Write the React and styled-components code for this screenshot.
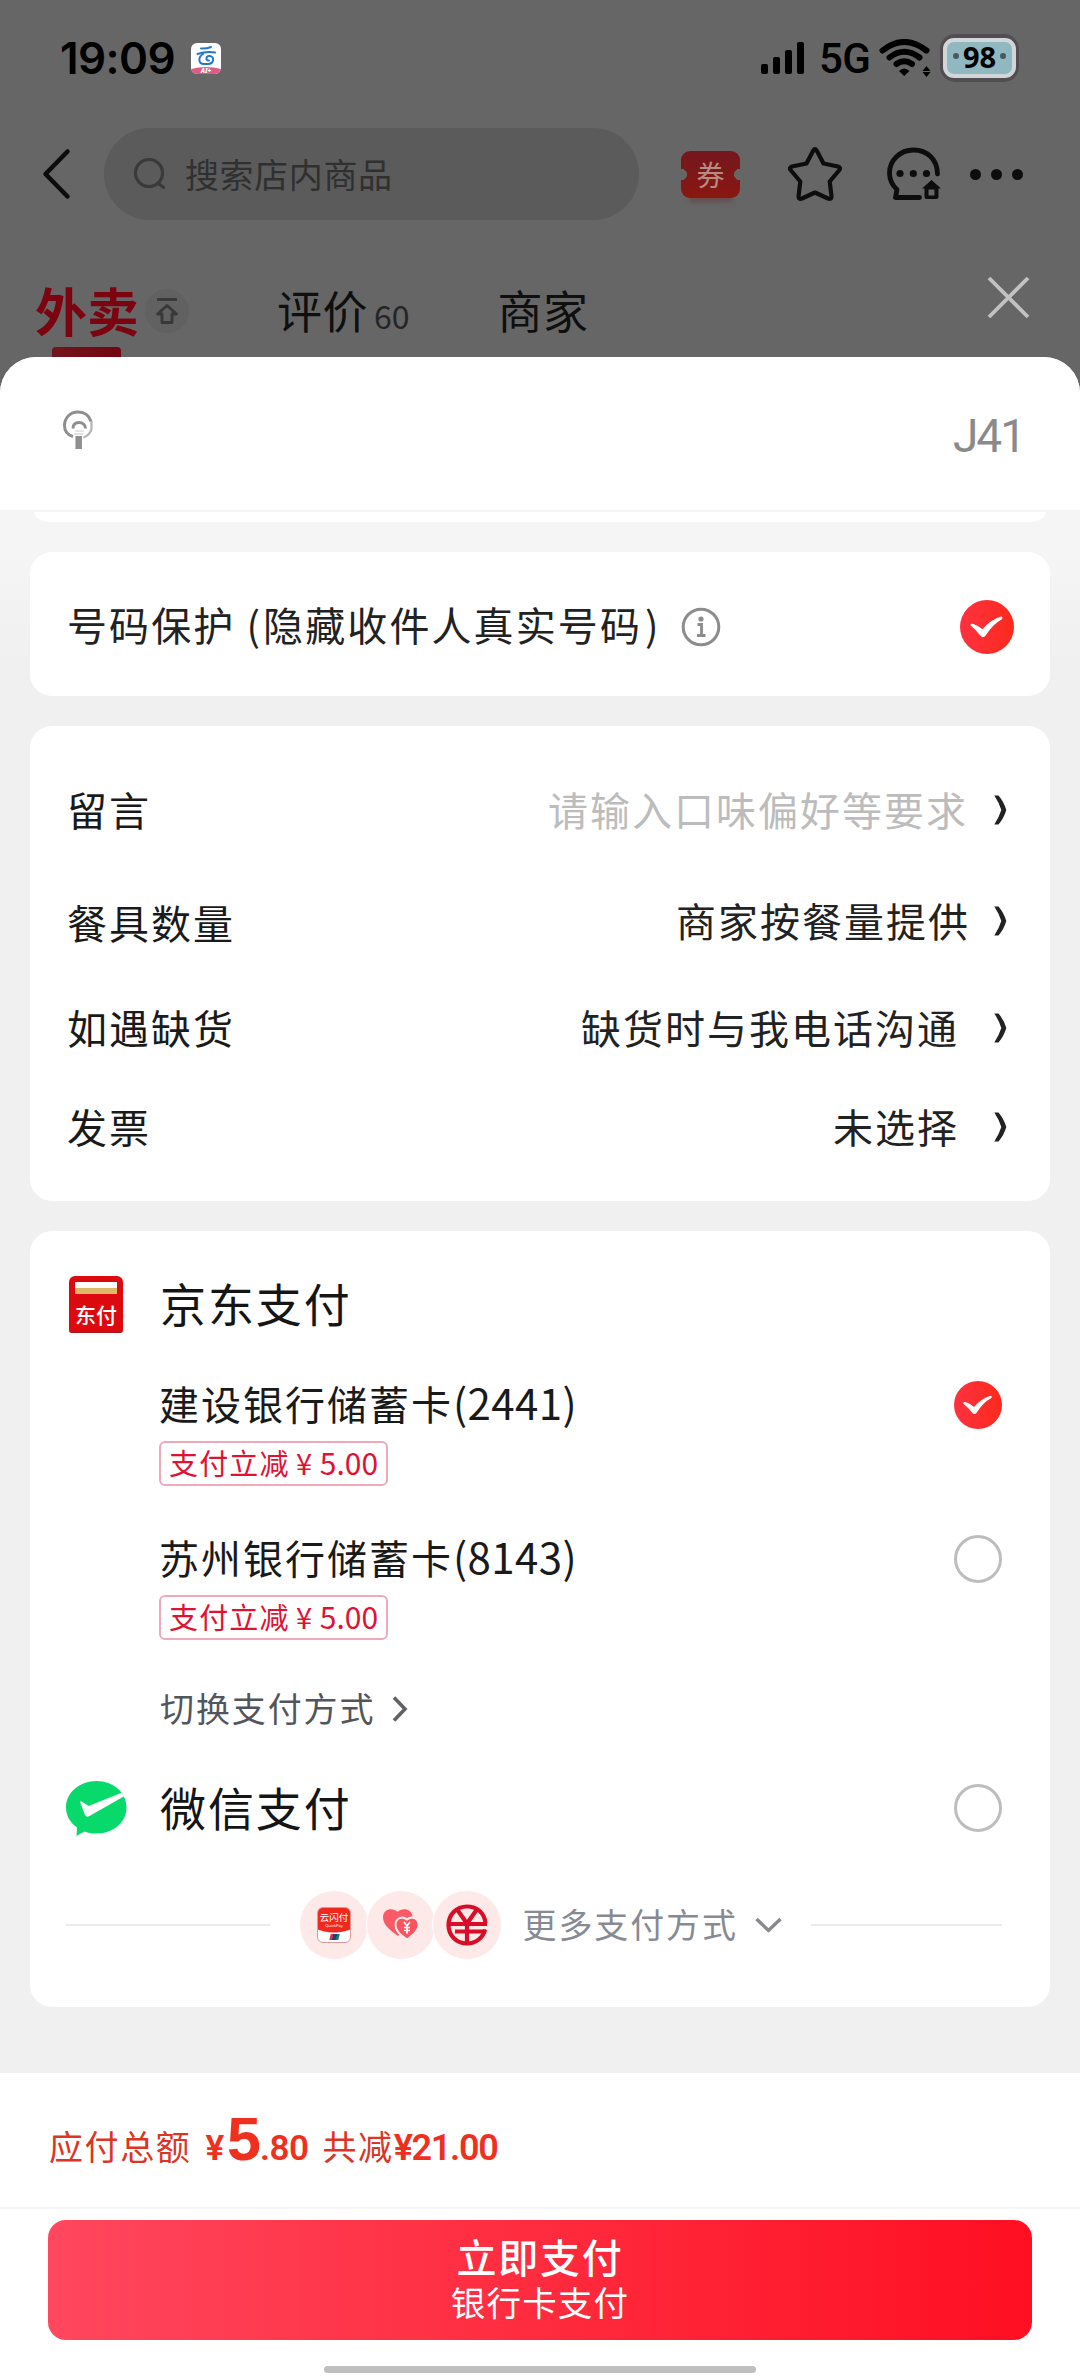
import React from "react";
import styled, { createGlobalStyle } from "styled-components";

const Global = createGlobalStyle`
  * { box-sizing: border-box; }
  html, body { margin: 0; padding: 0; background: #f0f0f0; }
  body {
    font-family: "Noto Sans CJK SC", sans-serif;
    color: #1a1a1a;
    overflow: hidden;
  }
  svg { display: block; flex: none; }
`;

const Screen = styled.div`
  width: 1080px;
  height: 2376px;
  background: #666;
  display: flex;
  flex-direction: column;
  overflow: hidden;
  white-space: nowrap;
`;

/* ---------- dimmed page behind the sheet ---------- */

const StatusBar = styled.div`
  height: 116px;
  display: flex;
  align-items: center;
  padding: 0 61px 0 60px;
`;
const Clock = styled.span`
  font: 600 44px/44px Inter, sans-serif;
  letter-spacing: -0.6px;
  color: #000;
  width: 131px;
`;
const StatusRight = styled.div`
  margin-left: auto;
  display: flex;
  align-items: center;
`;
const Network = styled.span`
  font: 500 42px/44px Roboto, sans-serif;
  letter-spacing: -0.5px;
  color: #000;
  width: 60px;
  margin-left: 14px;
  padding-top: 2px;
`;
const Battery = styled.div`
  width: 79px;
  height: 48px;
  border-radius: 15px;
  background: #524d52;
  padding: 4px 3px;
  margin-left: 9px;
`;
const BatteryShell = styled.div`
  height: 40px;
  border-radius: 11px;
  border: 4px solid #d2d6d8;
  background: #90b8c0;
  display: flex;
  align-items: center;
  justify-content: space-between;
  padding: 0 6px;
`;
const BatteryDot = styled.i`
  width: 6px;
  height: 6px;
  border-radius: 3px;
  background: #46595e;
  margin-top: -5px;
`;
const BatteryText = styled.span`
  font: 700 29px/30px "Noto Sans", sans-serif;
  color: #000;
  margin: -3px -4px 0;
`;

const SearchRow = styled.div`
  height: 116px;
  display: flex;
  align-items: center;
  padding: 0 52px 0 40px;
`;
const SearchBox = styled.div`
  width: 535px;
  height: 92px;
  margin-left: 33px;
  border-radius: 46px;
  background: #5b5b5b;
  display: flex;
  align-items: center;
  padding-left: 29px;
`;
const SearchHint = styled.span`
  font-size: 34px;
  line-height: 44px;
  letter-spacing: 0.6px;
  color: #303030;
  margin-left: 18px;
`;
const Coupon = styled.div`
  width: 59px;
  height: 47px;
  margin-left: 42px;
  border-radius: 9px;
  background: radial-gradient(circle 6px at 0 50%, #666 96%, transparent),
    radial-gradient(circle 6px at 100% 50%, #666 96%, transparent),
    linear-gradient(#74171f, #8a1711);
  box-shadow: 0 12px 5px -8px #694b4e;
  display: flex;
  align-items: center;
  justify-content: center;
  font-size: 28px;
  line-height: 40px;
  color: #b88b83;
`;
const StarSlot = styled.div`
  margin-left: 47px;
`;
const ChatSlot = styled.div`
  margin-left: 43px;
`;
const Dots = styled.div`
  display: flex;
  gap: 10px;
  margin-left: 28px;
  i {
    width: 11px;
    height: 11px;
    border-radius: 6px;
    background: #0d0d0d;
  }
`;

const TabRow = styled.div`
  height: 125px;
  display: flex;
  padding: 0 50px 0 35px;
`;
const ActiveTab = styled.div`
  width: 110px;
  padding-top: 42px;
`;
const ActiveLabel = styled.div`
  font-size: 52px;
  line-height: 72px;
  font-weight: 700;
  color: #7c0410;
`;
const ActiveBar = styled.div`
  width: 69px;
  height: 12px;
  margin: 1px 0 0 17px;
  border-radius: 4px 4px 0 0;
  background: linear-gradient(90deg, #74151c, #730510);
`;
const TopBadge = styled.div`
  width: 44px;
  height: 44px;
  border-radius: 22px;
  background: #616161;
  margin-top: 57px;
  display: flex;
  align-items: center;
  justify-content: center;
`;
const Tab = styled.div`
  display: flex;
  align-items: baseline;
  height: 64px;
  margin: 46px 0 0 ${(p) => p.$gap}px;
  font-size: 45px;
  line-height: 64px;
  letter-spacing: 0.5px;
  color: #0f0f0f;
  small {
    font-size: 32px;
    letter-spacing: 0;
    margin-left: 6px;
    color: #252525;
  }
`;
const CloseSlot = styled.div`
  margin: 44px 0 0 auto;
`;

/* ---------- sheet ---------- */

const Sheet = styled.div`
  flex: 1;
  display: flex;
  flex-direction: column;
  border-radius: 36px 36px 0 0;
  overflow: hidden;
  background: #f0f0f0;
`;
const SheetHead = styled.div`
  height: 153px;
  flex: none;
  background: #fff;
  display: flex;
  align-items: center;
  justify-content: space-between;
  padding: 0 56px 0 60px;
`;
const PinSlot = styled.div`
  margin-top: -7px;
`;
const HeadCode = styled.span`
  font: 400 46px/60px Roboto, sans-serif;
  letter-spacing: -2px;
  color: #8a8a8a;
  margin-top: 5px;
`;
const SheetBody = styled.div`
  flex: 1;
  padding: 2px 30px 0;
  background: linear-gradient(#f5f5f5 0, #f5f5f5 40px, #f0f0f0 150px);
`;
const CardTail = styled.div`
  height: 10px;
  margin: 0 4px;
  background: #fff;
  border-radius: 0 0 16px 16px / 0 0 10px 10px;
`;
const Card = styled.section`
  height: ${(p) => p.$h}px;
  margin-top: 30px;
  background: #fff;
  border-radius: 22px;
  padding: ${(p) => p.$pad || "0"};
`;
const PrivacyRow = styled.div`
  height: 100%;
  display: flex;
  align-items: center;
  padding: 5px 36px 0 37px;
`;
const Label = styled.span`
  font-size: 40px;
  line-height: 58px;
  letter-spacing: 2.1px;
  color: #222;
  margin-top: -5px;
`;
const Paren = styled.span`
  margin: 0 ${(p) => p.$after || 0}px 0 ${(p) => p.$before || 0}px;
`;
const InfoSlot = styled.div`
  margin: 0 auto 0 20px;
`;

const OptionRow = styled.div`
  height: ${(p) => p.$h}px;
  display: flex;
  align-items: center;
  justify-content: space-between;
  padding: 0 43px 0 37px;
`;
const OptionLabel = styled.span`
  font-size: 40px;
  line-height: 58px;
  letter-spacing: 2px;
  color: #1a1a1a;
  padding-top: ${(p) => p.$drop || 0}px;
`;
const OptionValue = styled.span`
  display: flex;
  align-items: center;
  font-size: 40px;
  line-height: 58px;
  letter-spacing: 2px;
  color: ${(p) => (p.$muted ? "#bcbcbc" : "#222")};
  gap: ${(p) => p.$gap}px;
  svg { margin-top: 2px; }
`;

const PayRow = styled.div`
  height: ${(p) => p.$h}px;
  margin-bottom: ${(p) => p.$after || 0}px;
  display: flex;
  align-items: center;
  padding: 0 48px 0 36px;
`;
const PayIcon = styled.div`
  width: 94px;
  padding-left: ${(p) => p.$inset || 0}px;
`;
const PayTitle = styled.span`
  flex: 1;
  font-size: 46px;
  line-height: 64px;
  letter-spacing: 1.9px;
  color: #151515;
  margin-top: -5px;
`;
const JdBadge = styled.div`
  width: 54px;
  height: 57px;
  border-radius: 6px 6px 3px 3px;
  background: #dc0a0e;
  border-bottom: 1px solid #a8161a;
  padding: 6px 6px 0;
  display: flex;
  flex-direction: column;
  align-items: center;
`;
const JdStripe = styled.div`
  width: 42px;
  height: 12px;
  flex: none;
  background: linear-gradient(#fff 50%, #deb769 50%);
`;
const JdText = styled.span`
  font-size: 21px;
  line-height: 30px;
  font-weight: 500;
  color: #fff;
  margin-top: 5px;
`;
const Bank = styled.div`
  height: 154px;
  padding: 0 48px 0 129px;
  display: flex;
  justify-content: space-between;
`;
const BankName = styled.div`
  font-size: 40px;
  line-height: 58px;
  letter-spacing: 2px;
  color: #1a1a1a;
  b {
    font-weight: 400;
    font-size: 42px;
    letter-spacing: 0.4px;
  }
`;
const Tag = styled.div`
  width: 229px;
  height: 45px;
  margin-top: 9px;
  border: 2px solid #f0a9bb;
  border-radius: 6px;
  display: flex;
  justify-content: center;
  font-size: 29px;
  line-height: 38px;
  letter-spacing: 1.2px;
  color: #e01233;
  span {
    width: 30px;
    text-align: center;
  }
  em {
    font-style: normal;
    letter-spacing: 0;
    font-size: 30px;
  }
`;
const Radio = styled.div`
  width: 48px;
  height: 48px;
  border-radius: 24px;
  border: 3px solid #bdbdbd;
`;
const BankRadio = styled.div`
  padding-top: 8px;
`;
const SwitchRow = styled.div`
  height: 56px;
  padding-left: 130px;
  display: flex;
  align-items: center;
  gap: 17px;
  font-size: 34px;
  letter-spacing: 1.9px;
  color: #53555c;
  span { margin-top: -3px; }
`;
const MoreRow = styled.div`
  height: 70px;
  margin-top: 11px;
  display: flex;
  align-items: center;
  padding: 0 48px 0 36px;
`;
const Rule = styled.i`
  height: 2px;
  flex: ${(p) => (p.$w ? "none" : 1)};
  width: ${(p) => (p.$w ? p.$w + "px" : "auto")};
  margin-left: ${(p) => p.$gap || 0}px;
  background: #ebebeb;
`;
const Bubbles = styled.div`
  display: flex;
  margin-left: 29px;
`;
const Bubble = styled.div`
  width: 70px;
  height: 70px;
  margin-right: -3.500px;
  border-radius: 35px;
  background: #fee9e9;
  border: 1px solid #fff;
  display: flex;
  align-items: center;
  justify-content: center;
`;
const MoreText = styled.span`
  font-size: 34px;
  line-height: 50px;
  letter-spacing: 1.9px;
  color: #878a93;
  margin: -2px 17px 0 24px;
`;
const FlashIcon = styled.div`
  width: 34px;
  height: 36px;
  border: 1px solid #d99;
  border-radius: 6px;
  background: radial-gradient(ellipse 34px 25px at 50% 0, #f0281e 96%, #fff);
  display: flex;
  flex-direction: column;
  align-items: center;
  color: #fff;
  font-size: 9.5px;
  line-height: 13px;
  padding-top: 3px;
  small {
    font: 4px/4px "Noto Sans", sans-serif;
  }
  i {
    width: 9px;
    height: 6px;
    margin-top: 6px;
    transform: skewX(-14deg);
    background: linear-gradient(90deg, #d8304a 30%, #1d3f7d 30% 70%, #0c7a7c 70%);
  }
`;

/* ---------- footer ---------- */

const Total = styled.div`
  height: 134px;
  flex: none;
  background: #fff;
  display: flex;
  align-items: baseline;
  padding: 36px 0 0 49px;
  font-size: 34px;
  line-height: 60px;
  letter-spacing: 1.600px;
  color: #dc3524;
`;
const Money = styled.b`
  font: ${(p) => p.$weight || 600} ${(p) => p.$size}px/60px ${(p) => (p.$bold ? '"Liberation Sans"' : "Roboto")}, sans-serif;
  letter-spacing: ${(p) => p.$track || 0}px;
  margin-left: ${(p) => p.$gap || 0}px;
  color: #f0301f;
`;
const Discount = styled.span`
  margin-left: 14px;
`;
const Footer = styled.div`
  height: 169px;
  flex: none;
  background: #fff;
  border-top: 2px solid #f5f5f5;
  padding: 11px 48px 0;
  display: flex;
  flex-direction: column;
  align-items: center;
`;
const PayButton = styled.button`
  width: 984px;
  height: 120px;
  flex: none;
  border: 0;
  padding: 0;
  border-radius: 18px;
  background: linear-gradient(90deg, #ff475e, #ff2b3e 50%, #ff0f22);
  color: #fff;
  font-family: inherit;
  display: flex;
  flex-direction: column;
  align-items: center;
  strong {
    font-size: 40px;
    line-height: 48px;
    font-weight: 500;
    letter-spacing: 1.8px;
    margin-top: 12px;
  }
  span {
    font-size: 34.5px;
    line-height: 40px;
    letter-spacing: 1.2px;
    margin-top: 1px;
  }
`;
const HomeBar = styled.div`
  width: 432px;
  height: 7px;
  border-radius: 4px;
  background: #bfbfbf;
  margin-top: 26px;
`;

/* ---------- drawings ---------- */

const CloudApp = () => (
  <svg width="30" height="31" viewBox="0 0 30 31">
    <defs>
      <clipPath id="app"><rect width="30" height="31" rx="6" /></clipPath>
    </defs>
    <g clipPath="url(#app)">
      <rect width="30" height="31" fill="#fff" />
      <path d="M0 26Q15 22 30 26V31H0z" fill="#dd5c86" />
      <g fill="none" stroke="#2277cf" strokeWidth="2" strokeLinecap="round">
        <path d="M10 5.5Q15 6 20 4" />
        <path d="M6.500 11Q15 8 24 9.500" />
        <path d="M12 11C7 14 7 21 13 21H17C23 21 24 13 18.500 13C14.500 13 14.500 18 18 17.500" />
      </g>
    </g>
    <text x="15" y="30" textAnchor="middle" fontFamily="Noto Sans" fontStyle="italic" fontWeight="800" fontSize="6.500" fill="#fff">AI+</text>
  </svg>
);

const Signal = () => (
  <svg width="44" height="33" viewBox="0 0 44 33">
    <rect x="0" y="22" width="7" height="10" rx="2" />
    <rect x="12" y="15" width="7" height="17" rx="2" />
    <rect x="24" y="8" width="7" height="24" rx="2" />
    <rect x="36" y="0" width="7" height="32" rx="2" />
  </svg>
);

const Wifi = () => (
  <svg width="52" height="38" viewBox="0 0 52 38">
    <g fill="none" stroke="#000" strokeWidth="6" strokeLinecap="round">
      <path d="M3.500 11.500Q25.200 -5.500 47.500 11.500" />
      <path d="M10.500 18.500Q25.200 7 40.500 18.500" />
      <path d="M17.500 25Q25.200 19.500 33 25" />
    </g>
    <path d="M20 32Q25 27 30.500 32L25.200 37z" />
    <path d="M47.500 27l4 5h-8zM47.500 38l4-5h-8z" />
  </svg>
);

const Back = () => (
  <svg width="31" height="52" viewBox="0 0 31 52">
    <path d="M27.500 3.500L5.500 26L27.500 48.500" fill="none" stroke="#0c0c0c" strokeWidth="4.500" strokeLinecap="round" strokeLinejoin="round" />
  </svg>
);

const SearchIcon = () => (
  <svg width="34" height="34" viewBox="0 0 34 34" fill="none" stroke="#3a3a3a" strokeWidth="3.200" strokeLinecap="round">
    <circle cx="16" cy="16" r="13.500" />
    <path d="M25 26L30.500 30.500" />
  </svg>
);

const Star = () => (
  <svg width="56" height="56" viewBox="0 0 56 56">
    <path d="M26.300 4.500Q28 1.800 29.700 4.500L36.500 17.500L51 20.500Q54.500 21.500 52 24.500L42.700 35.500L44.500 50Q44.600 53.800 41 52.500L28 46.500L15 52.500Q11.500 53.800 11.600 50L13.300 35.500L4 24.500Q1.500 21.500 5 20.500L19.500 17.500Z" fill="none" stroke="#0d0d0d" strokeWidth="4.200" strokeLinejoin="round" />
  </svg>
);

const Chat = () => (
  <svg width="56" height="56" viewBox="0 0 56 56" fill="none" stroke="#0d0d0d" strokeWidth="4.800" strokeLinecap="round" strokeLinejoin="round">
    <path d="M51.500 28C51.500 13.500 41 4 27.500 4C14 4 3.500 14.500 3.500 27C3.500 34.500 6.500 39.500 11 43.500L9.500 51.500H33.500" />
    <g fill="#0d0d0d" stroke="none">
      <circle cx="14" cy="27.500" r="3.600" />
      <circle cx="27.300" cy="27.500" r="3.600" />
      <circle cx="40.500" cy="27.500" r="3.600" />
      <path d="M45.500 34L55 42.500H52.500V50.500Q52.500 53 50 53H41Q38.500 53 38.500 50.500V42.500H36zM42.500 43.500V49.500H48.500V43.500z" fillRule="evenodd" />
    </g>
  </svg>
);

const ToTop = () => (
  <svg width="26" height="28" viewBox="0 0 26 28" fill="none" stroke="#383838" strokeWidth="2.800" strokeLinejoin="round">
    <path d="M3 2.500H23" />
    <path d="M13 8.500L22.500 17H18V25.500H8V17H3.500Z" />
  </svg>
);

const Close = () => (
  <svg width="43" height="43" viewBox="0 0 43 43">
    <path d="M2 2L41 41M41 2L2 41" stroke="#c2c2c2" strokeWidth="3.800" />
  </svg>
);

const Pin = () => (
  <svg width="36" height="42" viewBox="0 0 36 42" fill="none" stroke="#8f8f8f" strokeWidth="3">
    <path d="M31 12.500C29 6 24 3 18 3C10 3 4.500 9 4.500 16.500C4.500 22.500 8 26 13 27.500" />
    <path d="M31.500 12V20Q30 26 23.500 28.500" stroke="#b4b4b4" strokeWidth="2.200" />
    <path d="M13 19.500C13 15 16 13.500 19 13.500C22.500 13.500 25.500 16 25.500 19.500" />
    <path d="M15 22H24M14 25H23" stroke="#dcdcdc" strokeWidth="1.500" />
    <path d="M18.700 27V40" strokeWidth="6.500" />
  </svg>
);

const Info = () => (
  <svg width="40" height="40" viewBox="0 0 40 40" fill="none" stroke="#8c8c8c">
    <circle cx="20" cy="20" r="17.800" strokeWidth="3" />
    <circle cx="20" cy="12" r="2.600" fill="#8c8c8c" stroke="none" />
    <path d="M16.500 17.500H20.500V28M16 28.500H24.500" strokeWidth="2.800" />
  </svg>
);

const Check = ({ size }) => (
  <svg width={size} height={size} viewBox="0 0 48 48">
    <defs>
      <linearGradient id="red" x1="0" x2="1">
        <stop offset="0" stopColor="#ff3140" />
        <stop offset="1" stopColor="#fc2a1c" />
      </linearGradient>
    </defs>
    <circle cx="24" cy="24" r="24" fill="url(#red)" />
    <path d="M9 22.300Q10 20.500 12 21.300Q16 22.600 20 26Q27 17.500 36.500 14.700Q38.600 15 37.300 17Q29 21.500 22.800 31.500Q20.500 34.500 18 31.500Q14 26.500 9 22.300z" fill="#fff" />
  </svg>
);

const RowArrow = () => (
  <svg width="14" height="32" viewBox="0 0 14 32">
    <path d="M1.300 1.500H5.500Q11 8 13.300 16Q11 24 5.500 30.500H1.300Q6 23.500 8.300 16Q6 8.500 1.300 1.500z" fill="#222" />
  </svg>
);

const SmallArrow = () => (
  <svg width="16" height="26" viewBox="0 0 16 26">
    <path d="M2 1.500L13 13L2 24.500" fill="none" stroke="#606266" strokeWidth="3.600" />
  </svg>
);

const DownArrow = () => (
  <svg width="27" height="17" viewBox="0 0 27 17">
    <path d="M1.500 2L13.500 13.500L25.500 2" fill="none" stroke="#8a8a8e" strokeWidth="3.400" />
  </svg>
);

const WechatPay = () => (
  <svg width="61" height="55" viewBox="0 0 61 55">
    <path d="M30.500 0C47.500 0 60.500 11.500 60.500 26.500C60.500 41.500 47 52.500 30.500 52.500C26 52.500 22 52 18.500 50.500L10.500 55L11 46.500C4 41.500 0 34.500 0 26.500C0 11.500 13.500 0 30.500 0z" fill="#07d96b" />
    <path d="M14 21Q14.500 19.500 16.500 21L22.500 25L57.500 11Q59 13 59.500 14.500L23.500 35Q20.500 37 19 34z" fill="#fff" />
  </svg>
);

const Hearts = () => (
  <svg width="38" height="34" viewBox="0 0 38 34">
    <path d="M16 28C6 21 1 16 1 9C1 1 11 -1 15.500 4C20 -1 30.500 1 30.500 9C30.500 16 25 21 16 28z" fill="#fa5a66" />
    <path d="M25 31.500C17 26 13.500 22.500 13.500 17C13.500 9.500 21 8 25 11.500C29 8 36.500 9.500 36.500 17C36.500 22.500 32.500 26 25 31.500z" fill="#f95560" stroke="#fee9e9" strokeWidth="2" />
    <path d="M22 14L25 18L28 14M25 18V25.500M22 19.500H28M22 22.500H28" stroke="#fff" strokeWidth="1.600" fill="none" />
  </svg>
);

const DigitalYuan = () => (
  <svg width="42" height="42" viewBox="0 0 42 42" fill="none" stroke="#d80e28" strokeWidth="4.200">
    <path d="M39.500 19C38.500 9 31 2.500 21 2.500C10 2.500 2.500 11 2.500 21C2.500 31 10 39.500 21 39.500C30 39.500 37 34 39 25.500" />
    <path d="M11.500 6L21 19.500L30.500 6M3 20H41" />
    <path d="M9 27.500H40M21 20V39" />
  </svg>
);

const options = [
  { label: "留言", value: "请输入口味偏好等要求", h: 110, gap: 25, muted: true },
  { label: "餐具数量", value: "商家按餐量提供", h: 112, gap: 23, drop: 4 },
  { label: "如遇缺货", value: "缺货时与我电话沟通", h: 102, gap: 34 },
  { label: "发票", value: "未选择", h: 96, gap: 34 },
];

const banks = [
  { name: "建设银行储蓄卡", tail: "(2441)", checked: true },
  { name: "苏州银行储蓄卡", tail: "(8143)", checked: false },
];

export default function App() {
  return (
    <Screen>
      <Global />
      <StatusBar>
        <Clock>19:09</Clock>
        <CloudApp />
        <StatusRight>
          <Signal />
          <Network>5G</Network>
          <Wifi />
          <Battery>
            <BatteryShell>
              <BatteryDot />
              <BatteryText>98</BatteryText>
              <BatteryDot />
            </BatteryShell>
          </Battery>
        </StatusRight>
      </StatusBar>

      <SearchRow>
        <Back />
        <SearchBox>
          <SearchIcon />
          <SearchHint>搜索店内商品</SearchHint>
        </SearchBox>
        <Coupon>券</Coupon>
        <StarSlot><Star /></StarSlot>
        <ChatSlot><Chat /></ChatSlot>
        <Dots><i /><i /><i /></Dots>
      </SearchRow>

      <TabRow>
        <ActiveTab>
          <ActiveLabel>外卖</ActiveLabel>
          <ActiveBar />
        </ActiveTab>
        <TopBadge><ToTop /></TopBadge>
        <Tab $gap={88}>评价<small>60</small></Tab>
        <Tab $gap={88}>商家</Tab>
        <CloseSlot><Close /></CloseSlot>
      </TabRow>

      <Sheet>
        <SheetHead>
          <PinSlot><Pin /></PinSlot>
          <HeadCode>J41</HeadCode>
        </SheetHead>
        <SheetBody>
          <CardTail />
          <Card $h={144}>
            <PrivacyRow>
              <Label>
                号码保护 <Paren $after={1}>(</Paren>隐藏收件人真实号码<Paren $before={3}>)</Paren>
              </Label>
              <InfoSlot><Info /></InfoSlot>
              <Check size={54} />
            </PrivacyRow>
          </Card>

          <Card $h={475} $pad="28px 0 0">
            {options.map((o) => (
              <OptionRow key={o.label} $h={o.h}>
                <OptionLabel $drop={o.drop}>{o.label}</OptionLabel>
                <OptionValue $muted={o.muted} $gap={o.gap}>
                  {o.value}
                  <RowArrow />
                </OptionValue>
              </OptionRow>
            ))}
          </Card>

          <Card $h={776} $pad="33px 0 0">
            <PayRow $h={80} $after={29}>
              <PayIcon $inset={3}>
                <JdBadge>
                  <JdStripe />
                  <JdText>东付</JdText>
                </JdBadge>
              </PayIcon>
              <PayTitle>京东支付</PayTitle>
            </PayRow>
            {banks.map((b) => (
              <Bank key={b.name}>
                <div>
                  <BankName>{b.name}<b>{b.tail}</b></BankName>
                  <Tag>支付立减<span>¥</span><em>5.00</em></Tag>
                </div>
                <BankRadio>{b.checked ? <Check size={48} /> : <Radio />}</BankRadio>
              </Bank>
            ))}
            <SwitchRow>
              <span>切换支付方式</span>
              <SmallArrow />
            </SwitchRow>
            <PayRow $h={142}>
              <PayIcon><WechatPay /></PayIcon>
              <PayTitle>微信支付</PayTitle>
              <Radio />
            </PayRow>
            <MoreRow>
              <Rule $w={204} />
              <Bubbles>
                <Bubble>
                  <FlashIcon>云闪付<small>QuickPay</small><i /></FlashIcon>
                </Bubble>
                <Bubble><Hearts /></Bubble>
                <Bubble><DigitalYuan /></Bubble>
              </Bubbles>
              <MoreText>更多支付方式</MoreText>
              <DownArrow />
              <Rule $gap={29} />
            </MoreRow>
          </Card>
        </SheetBody>

        <Total>
          应付总额
          <Money $size={35} $gap={14}>¥</Money>
          <Money $size={61} $gap={3} $weight={700} $bold $track={-2}>5</Money>
          <Money $size={35} $gap={1} $track={-0.5}>.80</Money>
          <Discount>共减</Discount>
          <Money $size={36} $track={-1.3}>¥21.00</Money>
        </Total>
        <Footer>
          <PayButton>
            <strong>立即支付</strong>
            <span>银行卡支付</span>
          </PayButton>
          <HomeBar />
        </Footer>
      </Sheet>
    </Screen>
  );
}
